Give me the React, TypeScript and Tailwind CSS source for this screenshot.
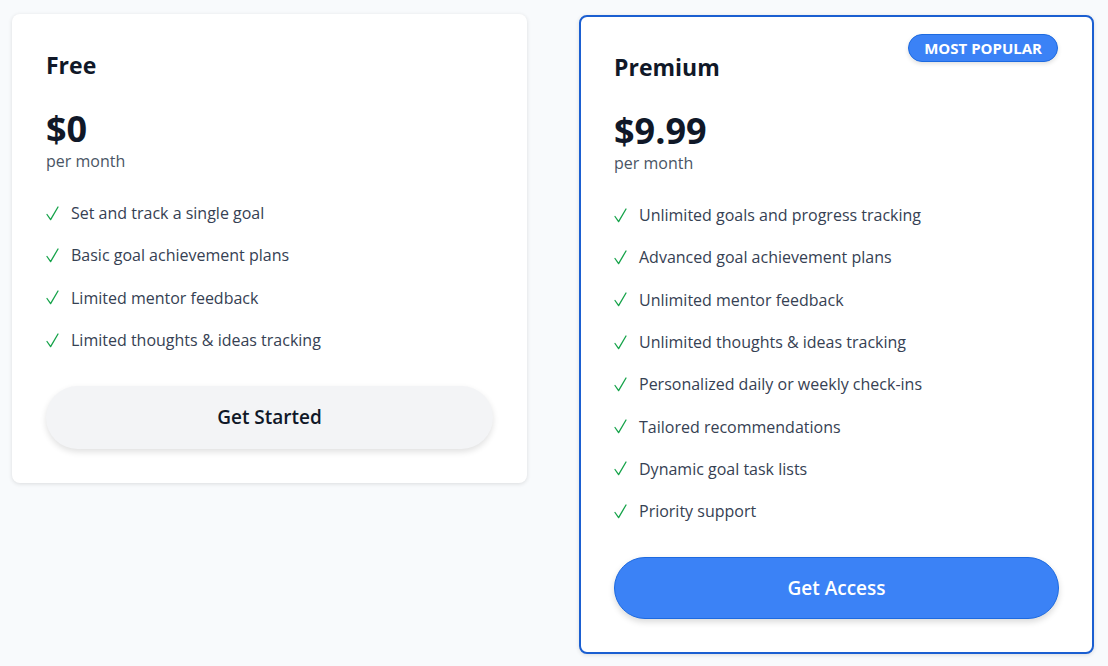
import React from "react";

const freeFeatures = [
  "Set and track a single goal",
  "Basic goal achievement plans",
  "Limited mentor feedback",
  "Limited thoughts & ideas tracking",
];

const premiumFeatures = [
  "Unlimited goals and progress tracking",
  "Advanced goal achievement plans",
  "Unlimited mentor feedback",
  "Unlimited thoughts & ideas tracking",
  "Personalized daily or weekly check-ins",
  "Tailored recommendations",
  "Dynamic goal task lists",
  "Priority support",
];

function Check() {
  return (
    <svg width="13" height="15" viewBox="0 0 13 15" className="shrink-0 mr-[12px]">
      <path d="M1 8.5 L4.6 13.6 L12 1" fill="none" stroke="#16a34a" strokeWidth="1.3" strokeLinecap="round" strokeLinejoin="round" />
    </svg>
  );
}

function Feature({ text }: { text: string }) {
  return (
    <li className="flex items-center h-[42.3px]">
      <Check />
      <span className="text-gray-700 text-[16px]">{text}</span>
    </li>
  );
}

export default function App() {
  return (
    <div
      className="min-h-[666px] bg-[#f8fafc] pl-3 pr-[14px] pt-[14px]"
      style={{ fontFamily: '"Open Sans", "Noto Sans", sans-serif' }}
    >
      <div className="grid grid-cols-2 gap-[52px] items-start">
        <div className="bg-white rounded-lg shadow-[0_1px_4px_rgba(0,0,0,0.12)] p-[34px]">
          <h2 className="text-[23px] font-bold text-gray-900 leading-8 mt-px">Free</h2>
          <div className="mt-[28px] text-[36px] font-bold text-gray-900 leading-10">$0</div>
          <div className="text-[16px] text-gray-600 leading-5 mt-[2px]">per month</div>
          <ul className="mt-[21px]">
            {freeFeatures.map((f) => (
              <Feature key={f} text={f} />
            ))}
          </ul>
          <button className="mt-[25px] w-full h-[63px] rounded-full bg-gray-100 shadow-[0_3px_6px_rgba(0,0,0,0.12)] text-[19px] font-semibold text-gray-900">
            Get Started
          </button>
        </div>

        <div className="relative bg-white rounded-lg border-2 border-[#1b5fd1] shadow-[0_1px_4px_rgba(0,0,0,0.12)] p-[33px] mt-px">
          <span className="absolute top-[17px] right-[34px] h-[28px] px-[15px] flex items-center rounded-full bg-[#3b82f6] border border-[#1d6ae0] text-white text-[15px] font-bold shadow-[0_2px_4px_rgba(0,0,0,0.12)]">
            MOST POPULAR
          </span>
          <h2 className="text-[23px] font-bold text-gray-900 leading-8 mt-px">Premium</h2>
          <div className="mt-[28px] text-[36px] font-bold text-gray-900 leading-10">$9.99</div>
          <div className="text-[16px] text-gray-600 leading-5 mt-[2px]">per month</div>
          <ul className="mt-[21px]">
            {premiumFeatures.map((f) => (
              <Feature key={f} text={f} />
            ))}
          </ul>
          <button className="mt-[25px] w-full h-[62px] rounded-full bg-[#3b82f6] border border-[#1d6ae0] shadow-[0_3px_6px_rgba(0,0,0,0.15)] text-[19px] font-semibold text-white">
            Get Access
          </button>
        </div>
      </div>
    </div>
  );
}
